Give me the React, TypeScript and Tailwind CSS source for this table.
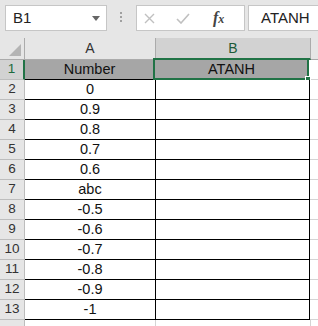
const VALUES = ["0", "0.9", "0.8", "0.7", "0.6", "abc", "-0.5", "-0.6", "-0.7", "-0.8", "-0.9", "-1"];

const font = { fontFamily: '"Liberation Sans", Arial, sans-serif' };

/* ── Formula bar strip ─────────────────────────────────────────── */
function FormulaBar() {
  return (
    <div className="flex h-[38px] items-start bg-[#e6e6e6] pt-[5px]">
      <div className="ml-[5px] flex h-[26px] w-[102px] items-center justify-between border border-[#c6c6c6] bg-white pl-[7px] pr-[6px]">
        <span className="text-[15px] text-[#222]">B1</span>
        <svg width="8" height="5" viewBox="0 0 8 5">
          <path d="M0 0h8L4 5z" fill="#666" />
        </svg>
      </div>
      <div className="ml-[13px] mt-[7px] flex flex-col gap-[2px]">
        <span className="h-[2px] w-[2px] bg-[#a0a0a0]" />
        <span className="h-[2px] w-[2px] bg-[#a0a0a0]" />
        <span className="h-[2px] w-[2px] bg-[#a0a0a0]" />
      </div>
      <div className="ml-[14px] flex h-[26px] w-[109px] items-center border border-[#c6c6c6] bg-white">
        <svg className="ml-[7px]" width="11" height="11" viewBox="0 0 11 11">
          <path d="M1 1l9 9M10 1l-9 9" stroke="#c0c0c0" strokeWidth="1.4" />
        </svg>
        <svg className="ml-[21px]" width="14" height="11" viewBox="0 0 14 11">
          <path d="M1 6l4 4 8-9" stroke="#c0c0c0" strokeWidth="1.6" fill="none" />
        </svg>
        <span
          className="ml-[23px] text-[16px] font-bold italic text-[#444]"
          style={{ fontFamily: '"Liberation Serif", "Times New Roman", serif' }}
        >
          f<span className="text-[12px]">x</span>
        </span>
      </div>
      <div className="ml-[3px] flex h-[26px] flex-1 items-center border border-r-0 border-[#c6c6c6] bg-white pl-[12px]">
        <span className="text-[15px] text-[#222]">ATANH</span>
      </div>
    </div>
  );
}

/* ── Column header row ─────────────────────────────────────────── */
function ColumnHeaders() {
  return (
    <div className="flex h-[22px] bg-[#e6e6e6] text-[14px] text-[#333]">
      <div className="relative w-[25px] border-r border-b border-[#ababab]">
        <svg className="absolute right-[3px] bottom-[3px]" width="12" height="12" viewBox="0 0 12 12">
          <path d="M12 0v12H0z" fill="#b4b4b4" />
        </svg>
      </div>
      <div className="flex w-[131px] items-center justify-center border-r border-b border-[#ababab]">A</div>
      <div className="flex w-[155px] items-center justify-center border-r border-b-2 border-r-[#ababab] border-b-[#217346] bg-[#d2d2d2] text-[#1d5b38]">
        B
      </div>
      <div className="flex-1 border-b border-[#ababab]" />
    </div>
  );
}

/* ── One sheet row ─────────────────────────────────────────────── */
function Row({ n, a, b, header }: { n: number; a: string; b: string; header?: boolean }) {
  return (
    <div className="flex h-[20px] text-[14.5px]">
      <div
        className={
          header
            ? "flex w-[25px] items-center justify-center border-r-2 border-b border-r-[#217346] border-b-[#bdbdbd] bg-[#d2d2d2] text-[13.5px] text-[#1d6b3e]"
            : "flex w-[25px] items-center justify-center border-r border-b border-[#bdbdbd] bg-[#e6e6e6] text-[13.5px] text-[#333]"
        }
      >
        {n}
      </div>
      <div
        className={
          (header ? "bg-[#a6a6a6] w-[130px] " : "bg-white w-[131px] ") +
          "flex items-center justify-center border-r border-b border-black pt-[1px] text-[#111]"
        }
      >
        {a}
      </div>
      <div
        className={
          (header ? "bg-[#a6a6a6] " : "bg-white ") +
          "relative flex w-[154px] items-center justify-center border-r border-b border-black pt-[1px] text-[#111]"
        }
      >
        {b}
        {header && (
          <div className="absolute -top-[2px] -left-[2px] -right-[1px] -bottom-[1px] border-2 border-[#217346]">
            <div className="absolute -right-[4px] -bottom-[4px] h-[6px] w-[6px] border border-white bg-[#217346]" />
          </div>
        )}
      </div>
      <div className="flex-1 border-b border-[#d4d4d4] bg-white" />
    </div>
  );
}

export default function App() {
  return (
    <div className="h-[326px] w-[318px] overflow-hidden bg-white" style={font}>
      <FormulaBar />
      <ColumnHeaders />
      <Row n={1} a="Number" b="ATANH" header />
      {VALUES.map((v, i) => (
        <Row key={i} n={i + 2} a={v} b="" />
      ))}
      <div className="flex h-[20px]">
        <div className="w-[25px] border-r border-[#bdbdbd] bg-[#e6e6e6]" />
        <div className="w-[131px] border-r border-[#d4d4d4]" />
        <div className="w-[155px] border-r border-[#d4d4d4]" />
      </div>
    </div>
  );
}
